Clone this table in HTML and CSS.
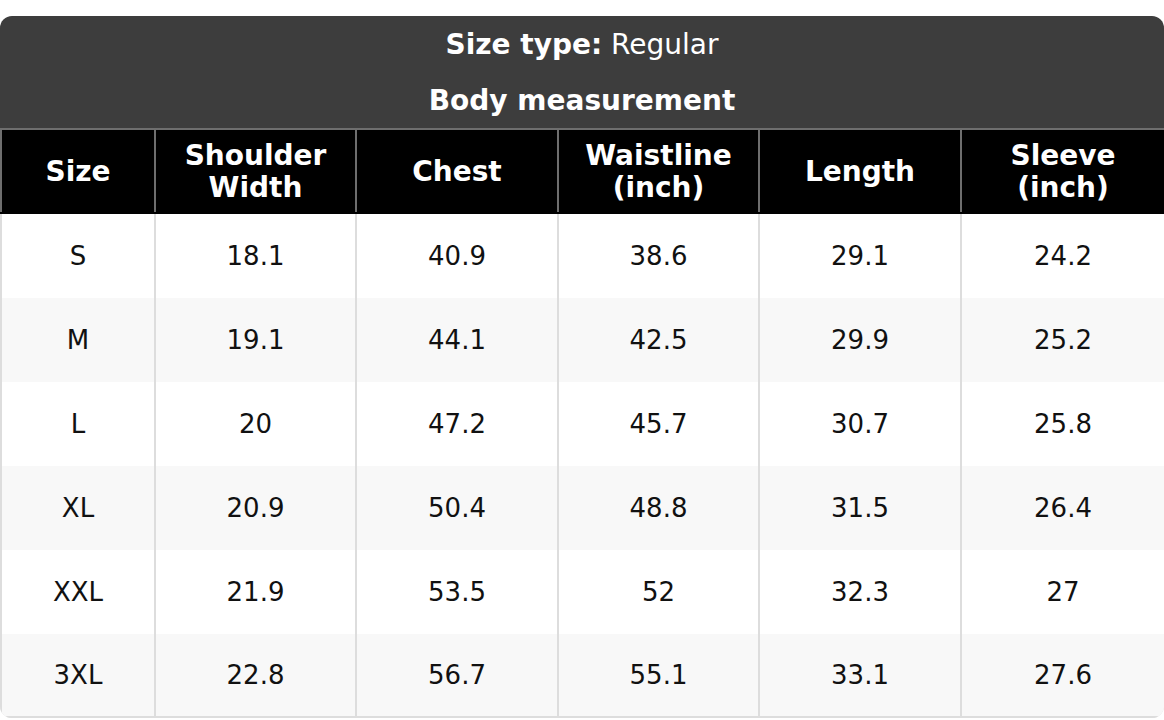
FILE: index.html
```html
<!DOCTYPE html>
<html lang="en">
<head>
<meta charset="utf-8">
<title>Size chart</title>
<link rel="stylesheet" href="styles.css">
</head>
<body>
<div class="page">
  <div class="card">
    <div class="title-bar">
      <div class="title-row"><strong>Size type:</strong> Regular</div>
      <div class="title-row"><strong>Body measurement</strong></div>
    </div>
    <table class="chart">
      <colgroup>
        <col class="c-size">
        <col class="c-a">
        <col class="c-b">
        <col class="c-c">
        <col class="c-d">
        <col class="c-e">
      </colgroup>
      <thead>
        <tr>
          <th>Size</th>
          <th>Shoulder<br>Width</th>
          <th>Chest</th>
          <th>Waistline<br>(inch)</th>
          <th>Length</th>
          <th>Sleeve<br>(inch)</th>
        </tr>
      </thead>
      <tbody>
        <tr><td>S</td><td>18.1</td><td>40.9</td><td>38.6</td><td>29.1</td><td>24.2</td></tr>
        <tr><td>M</td><td>19.1</td><td>44.1</td><td>42.5</td><td>29.9</td><td>25.2</td></tr>
        <tr><td>L</td><td>20</td><td>47.2</td><td>45.7</td><td>30.7</td><td>25.8</td></tr>
        <tr><td>XL</td><td>20.9</td><td>50.4</td><td>48.8</td><td>31.5</td><td>26.4</td></tr>
        <tr><td>XXL</td><td>21.9</td><td>53.5</td><td>52</td><td>32.3</td><td>27</td></tr>
        <tr><td>3XL</td><td>22.8</td><td>56.7</td><td>55.1</td><td>33.1</td><td>27.6</td></tr>
      </tbody>
    </table>
  </div>
</div>
</body>
</html>
```

FILE: styles.css
```css
html, body {
  margin: 0;
  padding: 0;
  background: #ffffff;
}

body {
  font-family: "DejaVu Sans", Verdana, sans-serif;
  color: #111111;
}

.page {
  padding-top: 16px;
  width: 1164px;
}

.card {
  border-radius: 12px;
  overflow: hidden;
  background: #ffffff;
  box-shadow: inset 0 -2px 0 #dddddd;
}

.title-bar {
  background: #3d3d3d;
  color: #ffffff;
}

.title-row {
  height: 56px;
  display: flex;
  align-items: center;
  justify-content: center;
  font-size: 28px;
  white-space: pre;
}

.title-row strong {
  font-weight: bold;
}

.chart {
  width: 1164px;
  border-collapse: collapse;
  table-layout: fixed;
}

.c-size { width: 154px; }
.c-a { width: 201px; }
.c-b { width: 202px; }
.c-c { width: 201px; }
.c-d { width: 202px; }
.c-e { width: 204px; }

.chart th {
  background: #000000;
  color: #ffffff;
  font-weight: bold;
  font-size: 28px;
  line-height: 32px;
  height: 80px;
  padding: 2px 6px 0;
  text-align: center;
  vertical-align: middle;
  border: 2px solid #6e6e6e;
  border-bottom-color: #000000;
}

.chart td {
  font-size: 26px;
  height: 84px;
  padding: 0;
  text-align: center;
  vertical-align: middle;
  border-left: 2px solid #dddddd;
  border-right: 2px solid #dddddd;
}

.chart tbody tr:last-child td {
  border-bottom: 2px solid #dddddd;
  height: 82px;
}

.chart tbody tr:nth-child(even) td {
  background: #f8f8f8;
}
```
